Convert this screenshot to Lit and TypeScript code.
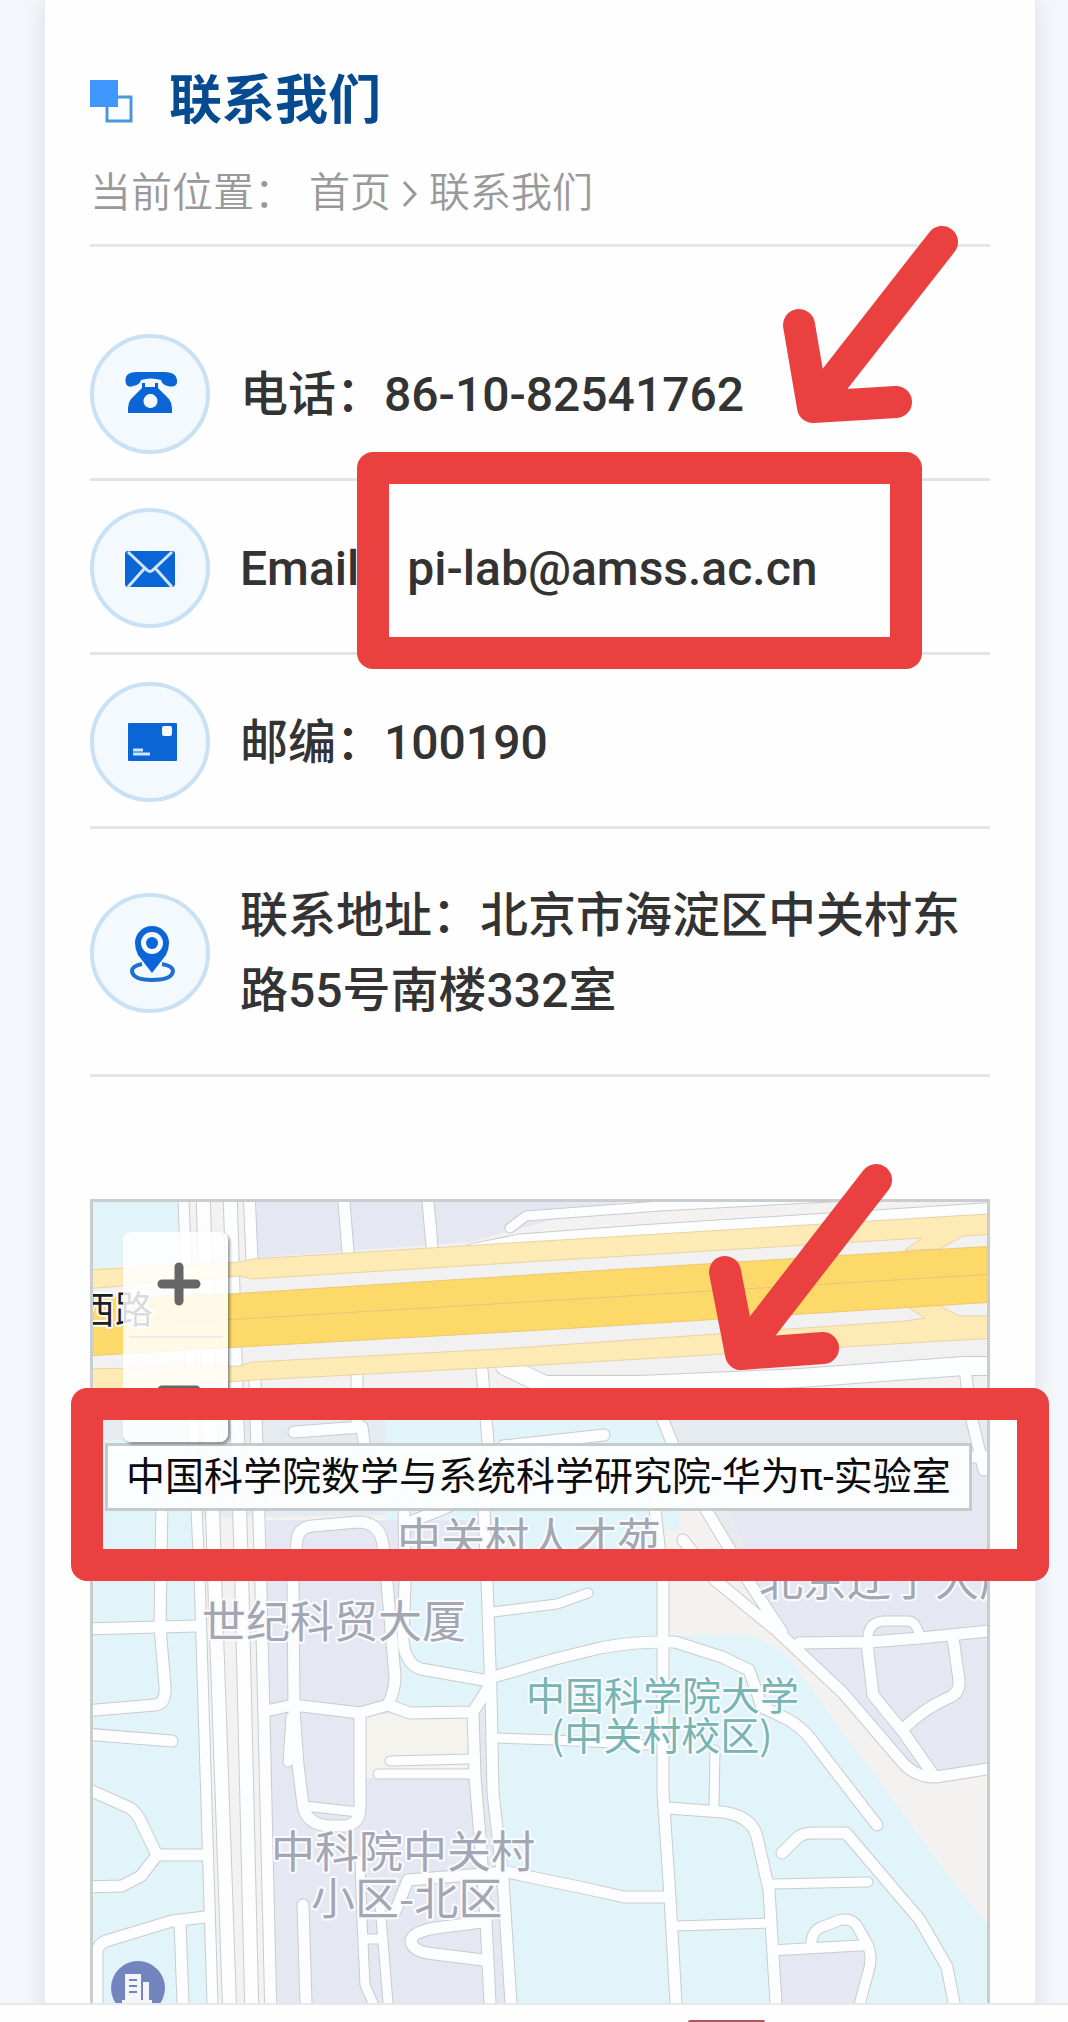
import { LitElement, html, svg, css } from 'lit'
import { customElement } from 'lit/decorators.js'

interface Road {
  d: string
  w?: number
}

const phoneIcon = svg`
  <path d="M36 50 Q33 38 47 38 H74 Q88 38 87 49 Q85 54 78 52 Q72 51 71 46 Q61 43 51 46 Q50 51 43 52 Q38 54 36 50 Z" />
  <path fill-rule="evenodd" d="M52 49 H55 V53 H65 V49 H68 V54 L79 65 Q82 69 82 74 V79 H38 V74 Q38 69 41 65 L52 54 Z M60 60 a7 7 0 1 0 1 0 Z" />
`

const mailIcon = svg`
  <rect x="35" y="43" width="50" height="36" rx="3" />
  <path class="cut" d="M38 44 L56 61 Q60 66 64 61 L82 44 M38 79 L54 61 M82 79 L66 61" />
`

const cardIcon = svg`
  <rect x="38" y="41" width="49" height="38" rx="1" />
  <rect class="hole" x="72" y="44" width="10" height="10" rx="2" />
  <path class="cut" d="M43 68 H53 M43 72 H60" />
`

const pinIcon = svg`
  <path class="ring" d="M52 71 Q42 73 42 78 Q43 87 62 87 Q82 87 83 78 Q83 73 72 71" />
  <path d="M62 80 L48 62 Q45 56 45 50 A17 17 0 0 1 79 50 Q79 56 76 62 Z" />
  <circle class="hole" cx="62" cy="50" r="11" />
  <circle cx="62" cy="50" r="6" />
`

const contacts = [
  { icon: phoneIcon, text: '电话：86-10-82541762' },
  { icon: mailIcon, text: 'Email：pi-lab@amss.ac.cn' },
  { icon: cardIcon, text: '邮编：100190' },
  { icon: pinIcon, text: '联系地址：北京市海淀区中关村东路55号南楼332室' },
]

// Streets of the map tile, drawn twice: grey casing first, white fill on top
const roads: Road[] = [
  // main north-south corridor
  { d: 'M183 1190 L200 1590 L213 2020 V2110', w: 10 },
  { d: 'M203 1190 L215 1590 L230 2020 V2110', w: 13 },
  { d: 'M230 1190 L242 1590 L252 2020 V2110', w: 13 },
  { d: 'M249 1190 L252 1260 M255 1380 L261 1590 L271 2020 V2110', w: 11 },
  // north edge
  { d: 'M343 1190 L348 1252' },
  { d: 'M427 1190 L432 1246' },
  { d: 'M510 1228 L526 1216 L660 1206 L1000 1188', w: 9 },
  { d: 'M470 1250 L520 1240 L640 1231 L1000 1208', w: 11 },
  { d: 'M357 1377 V1420' },
  { d: 'M482 1370 L488 1442 L484 1510 L487 1582 L491 1693 L493 1793 L503 1880 L511 2003 V2110' },
  { d: 'M505 1366 L545 1385 H640 L800 1378 L964 1366 L1000 1366', w: 18 },
  { d: 'M965 1370 L972 1420 L984 1470' },
  { d: 'M294 1432 L362 1427 L365 1450' },
  { d: 'M503 1446 L604 1435' },
  { d: 'M661 1415 L673 1445' },
  { d: 'M966 1457 H1000' },
  // west blocks
  { d: 'M162 1500 L160 1627 L165 1687 Q166 1704 155 1705 L85 1711' },
  { d: 'M85 1629 L197 1626' },
  { d: 'M85 1734 L172 1741' },
  { d: 'M85 1788 L130 1808 Q138 1814 142 1824 L157 1855 H203' },
  { d: 'M157 1855 L141 1876 L122 1886 L85 1887' },
  { d: 'M97 2110 V1952 Q98 1944 106 1941 L172 1921 L205 1917' },
  { d: 'M180 1922 L183 2003 V2110' },
  // centre blocks
  { d: 'M404 1500 L405 1582 L403 1640 Q405 1664 421 1669 L483 1680 L555 1659 L600 1648 Q635 1641 675 1642 L722 1657 L749 1670 L762 1707 L789 1720 Q806 1730 819 1750 L877 1825' },
  { d: 'M410 1522 L450 1506' },
  { d: 'M293 1582 L297 1540 Q298 1528 312 1526 L358 1522 Q380 1522 383 1545 L387 1582 L395 1677 Q395 1690 388 1705' },
  { d: 'M293 1582 L294 1710 L298 1765 L303 1805 Q306 1826 333 1826 H345 Q360 1824 360 1807 V1713' },
  { d: 'M305 1806 L358 1812', w: 9 },
  { d: 'M291 1717 L288 1762', w: 9 },
  { d: 'M266 1711 L293 1705 L360 1713 L388 1705 L410 1713 L473 1712 L490 1685' },
  { d: 'M473 1713 L475 1777 L480 1837 L486 1920 L490 2003 V2110' },
  { d: 'M390 1761 L470 1759', w: 9 },
  { d: 'M378 1774 H473', w: 9 },
  { d: 'M303 1905 L306 2003 V2110' },
  { d: 'M395 1912 L408 1880 L507 1872 L540 1879 L584 1888 L624 1897 H665' },
  { d: 'M360 1860 L362 1920 L365 1985 L373 2003 V2110', w: 9 },
  { d: 'M380 1905 L388 2003 V2110', w: 9 },
  { d: 'M363 1939 H382', w: 9 },
  { d: 'M482 1922 L435 1928 Q412 1932 411 1941 Q412 1950 427 1953 L483 1960' },
  { d: 'M497 1738 L555 1740 L648 1745', w: 9 },
  { d: 'M493 1612 L557 1604 L588 1593', w: 9 },
  // campus
  { d: 'M654 1500 L663 1582 V1793 L670 1897 L676 2003 V2110' },
  { d: 'M668 1808 L722 1812 Q752 1816 757 1837 L769 1890 L776 2003 V2110' },
  { d: 'M715 1750 L714 1807', w: 9 },
  { d: 'M675 1926 L769 1923', w: 9 },
  { d: 'M772 1884 L868 1882', w: 9 },
  { d: 'M782 1853 L796 1839 Q802 1833 812 1833 H846 L920 1920 L947 1967 L954 2003 V2110' },
  { d: 'M779 1950 L868 1945 M811 1945 Q812 1930 822 1927 L840 1920 Q852 1918 857 1926 L868 1945 Q873 1958 868 1973 L860 2003 V2110', w: 10 },
  // east side
  { d: 'M683 1540 L715 1580 L755 1613 L776 1630 L843 1693 L903 1763 Q915 1777 936 1777 L1000 1767' },
  { d: 'M700 1500 L729 1548 L749 1582 L782 1632' },
  { d: 'M799 1643 L870 1642 L920 1638 L1000 1630' },
  { d: 'M868 1638 Q868 1623 883 1621 H907 Q916 1620 920 1637', w: 9 },
  { d: 'M867 1643 L873 1695 L904 1733 L932 1773' },
  { d: 'M953 1638 L959 1680 Q960 1694 948 1698 Q925 1708 904 1728' },
]

@customElement('area-map')
export class AreaMap extends LitElement {
  static styles = css`
    :host {
      display: block;
      position: relative;
      isolation: isolate;
      overflow: hidden;
      aspect-ratio: 1;
      border: 3px solid #c9cdce;
      box-sizing: border-box;
    }

    .tile {
      display: block;
      width: 100%;
      height: 100%;
    }

    .land { fill: #f3f2f0; }
    .blue { fill: #e0f4f9; }
    .lavender { fill: #e5e8f2; }
    .grey { fill: #e5ebee; }
    .corridor { fill: #f2f1f2; }
    .cream { fill: #f4f3ed; }

    .casing,
    .road {
      fill: none;
      stroke-linecap: round;
      stroke-linejoin: round;
    }

    .casing { stroke: #cbcbcd; }
    .road { stroke: #fcfdfe; }

    .ramp {
      fill: #fdeab4;
      stroke: #e9d3a6;
    }

    .highway {
      fill: #fdd96a;
      stroke: #ecc870;
    }

    .lane {
      fill: none;
      stroke: #e3c77e;
    }

    text {
      font-family: 'Noto Sans CJK SC', sans-serif;
      paint-order: stroke;
      stroke: #fafbfd;
      stroke-width: 4px;
      stroke-linejoin: round;
    }

    .place {
      font-size: 44px;
      fill: #a3a6b3;
    }

    .campus {
      font-size: 39px;
      fill: #76b5b3;
    }

    .street {
      font-size: 38px;
      fill: #1d2023;
    }

    .poi { fill: #7484bf; }
    .poi-sign { fill: #f4f6fc; }

    .zoom {
      position: absolute;
      z-index: 1;
      top: 30px;
      left: 30px;
      display: flex;
      flex-direction: column;
      width: 105px;
      border-radius: 8px;
      background: rgba(255, 255, 255, 0.84);
      box-shadow: 2px 2px 3px rgba(0, 0, 0, 0.4);
    }

    .zoom button {
      display: flex;
      align-items: center;
      justify-content: center;
      height: 104px;
      padding: 0 0 0 6px;
      border: none;
      background: none;
    }

    .zoom hr {
      width: 94px;
      height: 2px;
      margin: 0 auto;
      border: none;
      background: #ececec;
    }

    .zoom path {
      stroke: #666;
      stroke-width: 9px;
      stroke-linecap: round;
    }

    .label {
      position: absolute;
      top: 241px;
      left: 12px;
      box-sizing: border-box;
      padding: 0 18px;
      border: 3px solid #c5cbcc;
      background: rgba(252, 254, 254, 0.95);
      color: #0c0c0c;
      font-family: Roboto, 'Noto Sans CJK SC', sans-serif;
      font-size: 39px;
      line-height: 62px;
      white-space: nowrap;
    }
  `

  render() {
    return html`
      <svg class="tile" viewBox="93 1202 894 894" preserveAspectRatio="xMidYMin slice">
        <rect class="land" x="93" y="1202" width="894" height="894" />
        <path class="blue" d="M93 1202 H177 L180 1262 L93 1268 Z" />
        <path class="lavender" d="M255 1202 H620 L470 1242 L255 1258 Z" />
        <path class="corridor" d="M93 1290 L987 1225 V1380 H93 Z" />
        <path class="grey" d="M93 1388 H987 V1640 H800 L700 1510 L93 1520 Z" />
        <path class="blue" d="M385 1415 H656 L672 1450 L680 1530 H480 V1600 H385 Z" />
        <path class="blue" d="M93 1440 H196 L213 2003 V2096 H93 Z" />
        <path class="lavender" d="M266 1520 H487 L511 2096 H275 Z" />
        <path class="blue" d="M405 1540 H487 L491 1690 L473 1710 H410 L392 1700 L403 1640 Z" />
        <path class="cream" d="M364 1714 H472 V1778 H364 Z" />
        <path class="blue" d="M487 1525 H663 V1635 H749 Q780 1645 796 1667 L843 1733 L893 1800 L944 1870 L987 1925 V2096 H511 Z" />
        <path class="lavender" d="M729 1510 L987 1460 V1769 L936 1780 Q912 1778 900 1763 L840 1695 L782 1635 Z" />
        <path class="lavender" d="M779 1950 L868 1945 Q873 1960 862 2003 V2096 H779 Z" />

        ${roads.map(r => svg`<path class="casing" stroke-width=${(r.w ?? 11) + 2} d=${r.d} />`)}
        ${roads.map(r => svg`<path class="road" stroke-width=${r.w ?? 11} d=${r.d} />`)}

        <path class="ramp" d="M85 1270 L240 1262 L252 1259 L560 1240 L987 1214 H995 V1234 L963 1236 L940 1249 L905 1250 L922 1238 L560 1260 L252 1279 L240 1276 L85 1289 Z" />
        <path class="ramp" d="M85 1369 L240 1366 L252 1362 L500 1349 L905 1321 L925 1318 L908 1307 L937 1305 L960 1316 H995 V1338 L540 1365 L255 1380 L85 1392 Z" />
        <path class="highway" d="M85 1298 L230 1294 L560 1273 L995 1246 V1302 L560 1329 L240 1347 L85 1356 Z" />
        <path class="lane" d="M85 1327 L240 1319 L560 1300 L995 1274" />

        <circle class="poi" cx="138" cy="1988" r="27" />
        <path class="poi-sign" fill-rule="evenodd" d="M125 1974 H141 V2000 H143 V1982 H149 V2000 H152 V2003 H122 V2000 H125 Z M129 1979 V1981 H137 V1979 Z M129 1985 V1987 H137 V1985 Z M129 1991 V1993 H137 V1991 Z" />

        <text class="street" x="77" y="1323">西路</text>
        <text class="place" x="397" y="1555">中关村人才苑</text>
        <text class="place" x="759" y="1596">北京辽宁大厦</text>
        <text class="place" x="202" y="1638">世纪科贸大厦</text>
        <text class="place" x="271" y="1868">中科院中关村</text>
        <text class="place" x="311" y="1915">小区-北区</text>
        <text class="campus" x="526" y="1710">中国科学院大学</text>
        <text class="campus" x="551" y="1750">(中关村校区)</text>
      </svg>
      <div class="label">中国科学院数学与系统科学研究院-华为π-实验室</div>
      <div class="zoom">
        <button type="button" aria-label="放大">
          <svg width="44" height="44" viewBox="0 0 44 44"><path d="M5 22 H39 M22 5 V39" /></svg>
        </button>
        <hr>
        <button type="button" aria-label="缩小">
          <svg width="44" height="44" viewBox="0 0 44 44"><path d="M5 22 H39" /></svg>
        </button>
      </div>
    `
  }
}

@customElement('app-root')
export class AppRoot extends LitElement {
  static styles = css`
    :host {
      display: flex;
      flex-direction: column;
      height: 100vh;
      overflow: hidden;
      background: #f4f7fb;
      color: #333;
      font-family: Roboto, 'Noto Sans CJK SC', sans-serif;
    }

    .page {
      position: relative;
      flex: 1;
      min-height: 0;
      overflow: hidden;
    }

    .card {
      margin: 0 33px 0 45px;
      padding: 63px 45px 48px;
      background: #fefefe;
      box-shadow: 0 0 22px rgba(60, 80, 110, 0.14);
    }

    h1 {
      display: flex;
      align-items: center;
      gap: 36px;
      margin: 0;
      color: #064a90;
      font-size: 53px;
      font-weight: 700;
      line-height: 76px;
    }

    .mark {
      width: 43px;
      height: 43px;
    }

    .mark .solid { fill: #3f96fb; }

    .mark .outline {
      fill: #fefefe;
      stroke: #4a97dd;
      stroke-width: 3px;
    }

    nav {
      display: flex;
      align-items: center;
      padding: 23px 0 20px;
      border-bottom: 3px solid #e6e6e6;
      color: #999;
      font-size: 41px;
      font-weight: 350;
      line-height: 62px;
    }

    nav a {
      color: inherit;
      text-decoration: none;
    }

    nav .home { margin-left: 14px; }

    .chevron {
      width: 38px;
      height: 38px;
      fill: none;
      stroke: #999;
      stroke-width: 3px;
    }

    ul {
      margin: 60px 0 122px;
      padding: 0;
      list-style: none;
    }

    li {
      display: flex;
      align-items: center;
      gap: 30px;
      min-height: 120px;
      padding: 27px 0 24px;
      border-bottom: 3px solid #e2e3e4;
      font-size: 48px;
      font-weight: 500;
      line-height: 75px;
    }

    li:last-child { padding: 49px 0 46px; }

    .icon {
      flex: none;
      width: 120px;
      height: 120px;
      fill: #0a65d6;
    }

    .disc {
      fill: #f4f9fe;
      stroke: #c9e1f4;
      stroke-width: 4px;
    }

    .hole { fill: #f4f9fe; }

    .cut {
      fill: none;
      stroke: #cfe6fb;
      stroke-width: 3px;
    }

    .ring {
      fill: none;
      stroke: #1f6fd0;
      stroke-width: 4px;
    }

    .marks {
      position: absolute;
      z-index: 2;
      top: 0;
      left: 0;
      width: 1068px;
      height: 1600px;
      fill: none;
      stroke: #ea4140;
      stroke-width: 32px;
      stroke-linecap: round;
      stroke-linejoin: round;
      pointer-events: none;
    }

    footer {
      display: flex;
      flex-direction: column;
      justify-content: flex-end;
      height: 17px;
      padding-left: 688px;
      border-top: 2px solid #e6e8ea;
      background: #fefefe;
    }

    .tab {
      width: 77px;
      height: 2px;
      border-radius: 2px 2px 0 0;
      background: #a85a5c;
    }
  `

  render() {
    return html`
      <div class="page">
        <main class="card">
          <h1>
            <svg class="mark" viewBox="0 0 43 43">
              <rect class="outline" x="17" y="17" width="24" height="24" />
              <rect class="solid" width="28" height="27" />
            </svg>
            联系我们
          </h1>
          <nav>
            <span>当前位置：</span>
            <a class="home" href="#">首页</a>
            <svg class="chevron" viewBox="0 0 38 38"><path d="M13 8 L24 20 L13 32" /></svg>
            <a href="#">联系我们</a>
          </nav>
          <ul>
            ${contacts.map(c => html`
              <li>
                <svg class="icon" viewBox="0 0 120 120">
                  <circle class="disc" cx="60" cy="60" r="58" />
                  ${c.icon}
                </svg>
                <span>${c.text}</span>
              </li>
            `)}
          </ul>
          <area-map></area-map>
        </main>

        <svg class="marks" viewBox="0 0 1068 1600">
          <path d="M942 242 L813 407 M799 325 L813 407 L896 402" />
          <rect x="373" y="468" width="533" height="185" />
          <path d="M876 1180 L741 1354 M725 1272 L741 1354 L823 1348" />
          <rect x="87" y="1404" width="946" height="161" />
        </svg>
      </div>
      <footer><div class="tab"></div></footer>
    `
  }
}
